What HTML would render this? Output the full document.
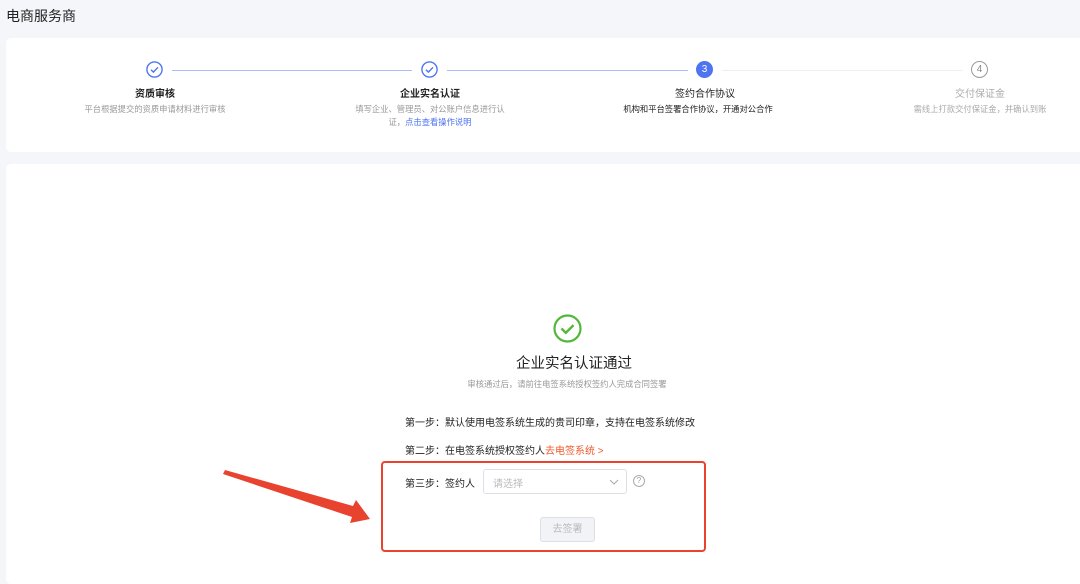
<!DOCTYPE html>
<html><head><meta charset="utf-8"><style>
*{margin:0;padding:0;box-sizing:border-box}
body{width:1080px;height:564px;overflow:hidden;background:#f5f6f9;font-family:"Liberation Sans","Noto Sans CJK SC",sans-serif;position:relative;color:#333}
.a{position:absolute;white-space:nowrap}
.c{transform:translateX(-50%);text-align:center}
.card{position:absolute;background:#fff;border-radius:5px}
.line{position:absolute;height:1px;top:70px}
.ic{position:absolute;width:17px;height:17px;border-radius:50%;top:61px}
</style></head><body>
<div class="a" style="left:6px;top:6px;font-size:14px;color:#222">电商服务商</div>
<div class="card" style="left:6px;top:38px;width:1090px;height:114px"></div>
<div class="card" style="left:6px;top:164px;width:1090px;height:420px"></div>

<div class="line" style="left:172px;width:240px;background:#a9bdf7"></div>
<div class="line" style="left:447px;width:241px;background:#a9bdf7"></div>
<div class="line" style="left:722px;width:240px;background:#eceef2"></div>

<svg class="ic" style="left:146px" viewBox="0 0 17 17"><circle cx="8.5" cy="8.5" r="7.6" fill="none" stroke="#4e74f2" stroke-width="1.4"/><path d="M5 8.7l2.4 2.4 4.6-4.8" fill="none" stroke="#4e74f2" stroke-width="1.4"/></svg>
<svg class="ic" style="left:421px" viewBox="0 0 17 17"><circle cx="8.5" cy="8.5" r="7.6" fill="none" stroke="#4e74f2" stroke-width="1.4"/><path d="M5 8.7l2.4 2.4 4.6-4.8" fill="none" stroke="#4e74f2" stroke-width="1.4"/></svg>
<div class="ic" style="left:696px;background:#4e74f2;color:#fff;font-size:10px;line-height:17px;text-align:center">3</div>
<div class="ic" style="left:971px;border:1.4px solid #999;color:#888;font-size:10px;line-height:15px;text-align:center">4</div>

<div class="a c" style="left:155px;top:85px;font-size:10px;font-weight:bold;color:#222">资质审核</div>
<div class="a c" style="left:155px;top:103px;font-size:8.3px;color:#999">平台根据提交的资质申请材料进行审核</div>
<div class="a c" style="left:430px;top:85px;font-size:10px;font-weight:bold;color:#222">企业实名认证</div>
<div class="a c" style="left:430px;top:103px;font-size:8.3px;color:#999;line-height:13px">填写企业、管理员、对公账户信息进行认<br>证，<span style="color:#4e74f2">点击查看操作说明</span></div>
<div class="a c" style="left:705px;top:85px;font-size:10px;color:#222">签约合作协议</div>
<div class="a c" style="left:698px;top:103px;font-size:8.3px;color:#222">机构和平台签署合作协议，开通对公合作</div>
<div class="a c" style="left:980px;top:85px;font-size:10px;color:#aaa">交付保证金</div>
<div class="a c" style="left:980px;top:103px;font-size:8.3px;color:#aaa">需线上打款交付保证金，并确认到账</div>

<svg class="a" style="left:553px;top:314px" width="29" height="29" viewBox="0 0 29 29"><circle cx="14.5" cy="14.5" r="13" fill="none" stroke="#52b83b" stroke-width="2.2"/><path d="M8.5 14.5l4.3 4.3 7.7-7.7" fill="none" stroke="#52b83b" stroke-width="2.4"/></svg>
<div class="a c" style="left:574px;top:352px;font-size:14.5px;color:#222">企业实名认证通过</div>
<div class="a c" style="left:567px;top:378px;font-size:8.3px;color:#999">审核通过后，请前往电签系统授权签约人完成合同签署</div>
<div class="a" style="left:405px;top:414px;font-size:10px;color:#222">第一步：默认使用电签系统生成的贵司印章，支持在电签系统修改</div>
<div class="a" style="left:405px;top:442px;font-size:10px;color:#222">第二步：在电签系统授权签约人<span style="color:#f0582b">去电签系统 &gt;</span></div>
<div class="a" style="left:381px;top:461px;width:325px;height:91px;border:2px solid #e8432f;border-radius:4px"></div>
<div class="a" style="left:405px;top:475px;font-size:10px;color:#222">第三步：签约人</div>
<div class="a" style="left:483px;top:469px;width:144px;height:25px;border:1px solid #dcdfe6;border-radius:3px;font-size:10px;color:#bbb;padding:5px 9px">请选择<svg style="position:absolute;right:7px;top:9px" width="10" height="6" viewBox="0 0 10 6"><path d="M1 1l4 4 4-4" fill="none" stroke="#aaa" stroke-width="1"/></svg></div>
<div class="a" style="left:633px;top:475px;width:12px;height:12px;border:1px solid #aaa;border-radius:50%;font-size:8px;color:#999;text-align:center;line-height:10px">?</div>
<div class="a" style="left:540px;top:517px;width:55px;height:25px;border:1px solid #dcdfe6;background:#f2f3f6;border-radius:3px;font-size:10px;color:#bbb;text-align:center;line-height:23px">去签署</div>

<svg class="a" style="left:0;top:0" width="1080" height="564"><path d="M223 474 L225 470 L353 506 L356 500 L370 519 L350 523 L352 517 Z" fill="#e8432f"/></svg>
</body></html>
